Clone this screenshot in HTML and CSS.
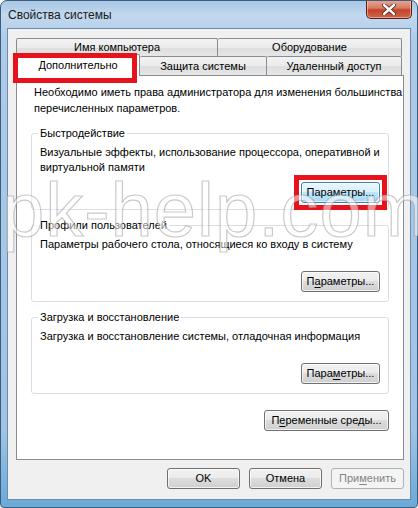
FILE: index.html
```html
<!DOCTYPE html>
<html lang="ru">
<head>
  <meta charset="UTF-8" />
  <title>Свойства системы</title>
  <link rel="stylesheet" href="styles.css">
</head>
<body>
  <div class="window">
    <div class="titlebar">
      <span class="title">Свойства системы</span>
      <button class="close">
        <svg width="14" height="11" viewBox="0 0 14 11">
          <path d="M2 1 L12 10 M12 1 L2 10" stroke="#4a1a10" stroke-width="4" stroke-linecap="round"/>
          <path d="M2 1 L12 10 M12 1 L2 10" stroke="#fff" stroke-width="2.4" stroke-linecap="round"/>
        </svg>
      </button>
    </div>

    <div class="client">
      <div class="tabs">
        <div class="tab-row">
          <div class="tab tab-name">Имя компьютера</div>
          <div class="tab tab-hw">Оборудование</div>
        </div>
        <div class="tab-row">
          <div class="tab tab-adv active">Дополнительно</div>
          <div class="tab tab-prot">Защита системы</div>
          <div class="tab tab-remote">Удаленный доступ</div>
        </div>
        <!-- red annotation around the selected tab -->
        <div class="mark-tab"></div>
      </div>

      <div class="panel">
        <p class="intro">Необходимо иметь права администратора для изменения большинства<br>перечисленных параметров.</p>

        <div class="group">
          <span class="group-title">Быстродействие</span>
          <p class="group-text">Визуальные эффекты, использование процессора, оперативной и<br>виртуальной памяти</p>
          <span class="mark-btn">
            <button class="btn btn-focus">Параметры...</button>
          </span>
        </div>

        <div class="group">
          <span class="group-title">Профили пользователей</span>
          <p class="group-text">Параметры рабочего стола, относящиеся ко входу в систему</p>
          <button class="btn">П<u>а</u>раметры...</button>
        </div>

        <div class="group">
          <span class="group-title">Загрузка и восстановление</span>
          <p class="group-text">Загрузка и восстановление системы, отладочная информация</p>
          <button class="btn">Пара<u>м</u>етры...</button>
        </div>

        <div class="env-row">
          <button class="btn btn-env">П<u>е</u>ременные среды...</button>
        </div>
      </div>

      <div class="footer">
        <button class="btn btn-foot">OK</button>
        <button class="btn btn-foot">Отмена</button>
        <button class="btn btn-foot" disabled>При<u>м</u>енить</button>
      </div>
    </div>
  </div>

  <div class="watermark">pk-help.com</div>
</body>
</html>
```

FILE: styles.css
```css
body {
  margin: 0;
  font-family: "Liberation Sans", Arial, sans-serif;
  font-size: 11px;
  color: #000;
  background: #fff;
}
.window {
  position: relative;
  width: 418px;
  height: 508px;
  box-sizing: border-box;
  border: 1px solid #3a5e80;
  border-radius: 7px 7px 4px 4px;
  background: linear-gradient(180deg, #a8c6e4 0, #c2d8ee 14px, #aecbe8 40px, #9fc3e5 85%, #6aaad6 100%);
  overflow: hidden;
}
.titlebar {
  height: 27px;
  display: flex;
  justify-content: space-between;
  align-items: flex-start;
}
.title {
  margin: 6px 0 0 7px;
  font-size: 12px;
  line-height: 16px;
  color: #1a1a1a;
}
.close {
  width: 46px;
  height: 19px;
  margin: -1px 5px 0 0;
  padding: 0;
  border: 1px solid #5a2014;
  border-top: none;
  border-radius: 0 0 5px 5px;
  background: linear-gradient(180deg, #e9a996 0, #d77a62 45%, #c2432a 55%, #d0674a 100%);
  box-shadow: inset 0 0 0 1px rgba(255, 220, 210, 0.5);
  display: flex;
  align-items: center;
  justify-content: center;
}
.client {
  height: 472px;
  margin: 0 6px;
  box-sizing: border-box;
  border: 1px solid #6d8cab;
  background: #f0f0f0;
  padding: 9px 6px 0 8px;
}
.tabs {
  position: relative;
  margin-right: 2px;
}
.tab-row {
  display: flex;
}
.tab {
  height: 18px;
  box-sizing: border-box;
  border: 1px solid #898c95;
  border-bottom: none;
  border-radius: 2px 2px 0 0;
  background: linear-gradient(180deg, #f3f3f3 0, #ebebeb 50%, #dedede 51%, #e6e6e6 100%);
  text-align: center;
  line-height: 17px;
  white-space: nowrap;
}
.tab + .tab {
  border-left: none;
}
.tab-name { width: 202px; }
.tab-hw { flex: 1; }
.tab-adv { width: 124px; }
.tab-prot { width: 127px; }
.tab-remote { flex: 1; }
.tab-row + .tab-row .tab {
  height: 19px;
  line-height: 18px;
}
.tab-row + .tab-row .tab.active {
  height: 22px;
  margin: -2px 0 -1px;
  background: #fff;
  position: relative;
  z-index: 1;
  line-height: 20px;
}
.mark-tab {
  position: absolute;
  left: -3px;
  top: 15px;
  width: 124px;
  height: 30px;
  box-sizing: border-box;
  border: 5px solid #e8121c;
  z-index: 2;
}
.panel {
  height: 385px;
  box-sizing: border-box;
  border: 1px solid #898c95;
  background: #fff;
  padding: 8px 14px 0;
}
.intro {
  margin: 0 0 0 3px;
  line-height: 16px;
  white-space: nowrap;
}
.group {
  height: 77px;
  box-sizing: border-box;
  margin-top: 15px;
  border: 1px solid #d5dfe5;
  border-radius: 3px;
  padding: 0 8px 9px;
  display: flex;
  flex-direction: column;
  align-items: flex-start;
}
.intro + .group {
  margin-top: 17px;
}
.group-title {
  margin: -8px 0 0 -2px;
  padding: 0 2px;
  background: #fff;
  line-height: 15px;
}
.group-text {
  margin: 4px 0 0;
  line-height: 15px;
  white-space: nowrap;
}
.group .btn,
.group .mark-btn {
  margin-top: auto;
  align-self: flex-end;
}
.mark-btn {
  display: flex;
  padding: 2px;
  margin-right: -7px;
  margin-bottom: -7px;
  border: 5px solid #e8121c;
}
.btn {
  width: 79px;
  height: 21px;
  padding: 0;
  box-sizing: border-box;
  border: 1px solid #707070;
  border-radius: 3px;
  background: linear-gradient(180deg, #f2f2f2 0, #ebebeb 49%, #dddddd 50%, #cfcfcf 100%);
  box-shadow: inset 0 0 0 1px rgba(255, 255, 255, 0.7);
  font-family: inherit;
  font-size: 11px;
  line-height: 17px;
  color: #000;
  white-space: nowrap;
}
.btn u {
  text-underline-offset: 2px;
}
.btn-focus {
  border-color: #3c7fb1;
  background: linear-gradient(180deg, #eaf6fd 0, #d9f0fc 49%, #bee6fd 50%, #a7d9f5 100%);
}
.env-row {
  display: flex;
  justify-content: flex-end;
  margin-top: 16px;
}
.btn-env {
  width: 125px;
}
.footer {
  display: flex;
  justify-content: flex-end;
  gap: 9px;
  margin-top: 8px;
}
.btn-foot {
  width: 73px;
}
.btn:disabled {
  border-color: #adb2b5;
  background: #f4f4f4;
  box-shadow: none;
  color: #838383;
}
.watermark {
  position: absolute;
  left: 2px;
  top: 165px;
  font-family: "Liberation Sans", Arial, sans-serif;
  font-size: 76px;
  line-height: 90px;
  letter-spacing: 1px;
  white-space: nowrap;
  color: rgba(255, 255, 255, 0.5);
  -webkit-text-stroke: 1.2px rgba(150, 150, 150, 0.5);
  pointer-events: none;
}
```
